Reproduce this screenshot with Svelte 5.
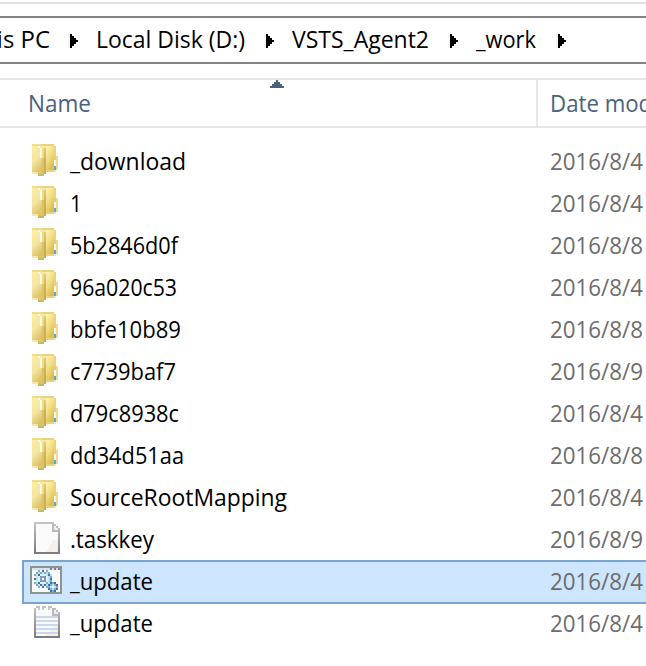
<script>
  const crumbs = [
    { text: 'This PC', width: 81, before: 18, after: 18 },
    { text: 'Local Disk (D:)', width: 149, before: 19, after: 18 },
    { text: 'VSTS_Agent2', width: 137, before: 19, after: 18 },
    { text: '_work', width: 60, before: 20, after: 0 }
  ];
  const files = [
    { kind: 'folder', name: '_download', width: 116, date: '2016/8/4' },
    { kind: 'folder', name: '1', width: 12, date: '2016/8/4' },
    { kind: 'folder', name: '5b2846d0f', width: 108, date: '2016/8/8' },
    { kind: 'folder', name: '96a020c53', width: 107, date: '2016/8/4' },
    { kind: 'folder', name: 'bbfe10b89', width: 111, date: '2016/8/8' },
    { kind: 'folder', name: 'c7739baf7', width: 106, date: '2016/8/9' },
    { kind: 'folder', name: 'd79c8938c', width: 109, date: '2016/8/4' },
    { kind: 'folder', name: 'dd34d51aa', width: 114, date: '2016/8/8' },
    { kind: 'folder', name: 'SourceRootMapping', width: 217, date: '2016/8/4' },
    { kind: 'file', name: '.taskkey', width: 84, date: '2016/8/9' },
    { kind: 'batch', name: '_update', width: 83, date: '2016/8/4', selected: true },
    { kind: 'text', name: '_update', width: 83, date: '2016/8/4' }
  ];
  const colors = { b: '#7fabcc', c: '#3b74a4', l: '#bfe0f0', d: '#8796a4', w: '#ffffff', p: '#e2f0f7' };
  const bigGear = [
    '..b.c.b..',
    '.blblblb.',
    'blcppplcl',
    '.lpdbdplb',
    'clpbwdplc',
    '.lpdbdplb',
    'blcpppblb',
    '.blclclb.',
    '..b.c.b..'
  ];
  const smallGear = ['.cbc.', 'cblbc', 'blwlb', 'cblbc', '.cbc.'];
  const pixels = (rows, left, top) =>
    rows.flatMap((row, y) =>
      [...row].map((c, x) => ({ x: x + left, y: y + top, fill: colors[c] })).filter((p) => p.fill)
    );
  const gears = [...pixels(bigGear, 2, 3), ...pixels(smallGear, 9, 9)];
</script>

{#snippet label(text, width)}
  <svg class="label" {width} height="34">
    <text x="0" y="24" textLength={width} lengthAdjust="spacingAndGlyphs">{text}</text>
  </svg>
{/snippet}

{#snippet icon(kind)}
  <svg class="icon" viewBox="0 0 16 16" shape-rendering="crispEdges">
    {#if kind === 'folder'}
      <path fill="#f3e6ae" d="M1 0h6v1h6v13H8v1H7v1H4v-1H1z" />
      <path fill="url(#flap)" d="M1 1h5v14H4v-1H1z" />
      <path fill="#f0dc8a" d="M1 0h5v1H1z" />
      <path fill="url(#panel)" d="M8 1h4v12H8z" />
      <path fill="#ecd27a" d="M6 0h6v1H6zM12 1h1v5h-1zM8 13h4v1H8z" />
      <path fill="url(#fold)" d="M7 2h1v13H7z" />
      <path fill="#dcc16b" d="M6 7h1v8H6z" />
      <path fill="#f1db86" d="M6 2h1v5H6z" />
      <path fill="#fffdf0" d="M4 1h1v1h1v5H5V2H4z" />
      <path fill="#cfb562" d="M4 15h3v1H4z" />
      <path fill="#e5cd78" d="M12 6h1v7h-1z" />
      <path fill="#fbfaf2" d="M12 8h1v3h-1z" />
      <path fill="#4eaed4" d="M12 11h1v2h-1z" />
      <path fill="#ecd995" d="M13 6h1v7h-1z" />
    {:else if kind === 'batch'}
      <path fill="#8b9493" d="M0 1h16v14H0z" />
      <path fill="#f8f9fb" d="M1 2h14v12H1z" />
      <path fill="#dcdee8" d="M1 2h14v1H1z" />
      <path fill="#7480a0" d="M10 2h1v1h-1zM12 2h1v1h-1zM14 2h1v1h-1z" />
      {#each gears as p}
        <rect x={p.x} y={p.y} width="1" height="1" fill={p.fill} />
      {/each}
    {:else}
      <path fill="url(#edge)" d="M2 0h10v1h1v1h1v1h1v13H2z" />
      <path fill="#fafafa" d="M3 1h8v4h3v10H3z" />
      <path fill="#f6efec" d="M11 9h3v6H8v-1h1v-1h1v-2h1z" />
      <path fill="#b9b9b9" d="M11 1h1v3h2v1h-3z" />
      <path fill="#eeeeee" d="M12 2h1v1h1v1h-2z" />
      {#if kind === 'text'}
        <path fill="#ffffff" d="M2 0h1v1H2zM5 0h1v1H5zM8 0h1v1H8zM11 0h1v1h-1z" />
        <path fill="#c9c9c9" d="M4 1h1v1H4zM6 1h1v1H6zM9 1h1v1H9z" />
        <path fill="#cbd7ea" d="M3 5h11v1H3zM3 7h11v1H3zM3 9h11v1H3zM3 11h11v1H3zM3 13h11v1H3z" />
      {/if}
    {/if}
  </svg>
{/snippet}

<svg class="defs" width="0" height="0">
  <defs>
    <linearGradient id="flap" x1="0" y1="0" x2=".35" y2="1">
      <stop stop-color="#fbefa0" /><stop offset=".55" stop-color="#f5e5a0" /><stop offset="1" stop-color="#ddc468" />
    </linearGradient>
    <linearGradient id="panel" x1="0" y1="0" x2=".6" y2="1">
      <stop stop-color="#fff5b4" /><stop offset=".5" stop-color="#f2de83" /><stop offset="1" stop-color="#dcbd4e" />
    </linearGradient>
    <linearGradient id="fold" x2="0" y2="1">
      <stop stop-color="#e3cb76" /><stop offset=".5" stop-color="#ceb157" /><stop offset="1" stop-color="#c8a94e" />
    </linearGradient>
    <linearGradient id="edge" x2="0" y2="1">
      <stop stop-color="#c4c4c4" /><stop offset="1" stop-color="#7b7b7b" />
    </linearGradient>
  </defs>
</svg>

<main>
  <nav>
    {#each crumbs as crumb}
      {@render label(crumb.text, crumb.width)}
      <svg class="arrow" style:margin-left="{crumb.before}px" style:margin-right="{crumb.after}px" viewBox="0 0 5 7" shape-rendering="crispEdges">
        <path fill="#f4f4f4" d="M0 0h1v7H0z" />
        <path d="M1 0h1v1h1v1h1v1h1v1H4v1H3v1H2v1H1z" />
      </svg>
    {/each}
  </nav>
  <header>
    <div class="name">
      {@render label('Name', 63)}
      <svg class="sort" viewBox="0 0 7 4" shape-rendering="crispEdges">
        <path d="M3 0h1v1h1v1h1v1h1v1H0V3h1V2h1V1h1z" />
      </svg>
    </div>
    <div class="date">{@render label('Date modified', 147)}</div>
  </header>
  <section>
    {#each files as file}
      <div class="row" class:selected={file.selected}>
        {@render icon(file.kind)}
        <div class="filename">{@render label(file.name, file.width)}</div>
        <div class="modified">{@render label(file.date, 93)}</div>
      </div>
    {/each}
  </section>
</main>

<style>
  :global(body) { background: #fff; overflow: hidden; }
  .defs { display: block; height: 0; }
  main {
    box-sizing: border-box;
    width: 646px;
    height: 666px;
    overflow: hidden;
    background: #fff;
    padding-top: 2px;
    font: 24px 'Open Sans', 'Noto Sans', sans-serif;
  }
  svg { flex: none; display: block; }
  .label { overflow: visible; fill: currentColor; }
  nav {
    display: flex;
    box-sizing: border-box;
    height: 62px;
    border-top: 2px solid #e0e0e0;
    border-bottom: 2px solid #848484;
    padding-top: 20px;
    background: linear-gradient(#848484, #848484) 0 12px / 100% 2px no-repeat;
  }
  nav > .label:first-child { margin-left: -31px; }
  .arrow { width: 10px; height: 14px; margin-top: 10px; }
  header {
    display: flex;
    box-sizing: border-box;
    height: 50px;
    margin-top: 14px;
    border-top: 2px solid #e6e6e6;
    border-bottom: 2px solid #e6e6e6;
    color: #4a627e;
  }
  .name {
    display: flex;
    box-sizing: border-box;
    width: 538px;
    flex: none;
    border-right: 2px solid #e6e6e6;
    padding-left: 28px;
  }
  header .label { margin-top: 8px; }
  .sort { width: 14px; height: 8px; margin-left: 179px; fill: #4a627e; }
  .date { padding-left: 12px; }
  section { padding-top: 12px; }
  .row {
    display: flex;
    box-sizing: border-box;
    height: 42px;
    margin-left: 22px;
    padding: 4px 0 0 8px;
  }
  .icon { width: 32px; height: 32px; }
  .filename { width: 488px; flex: none; padding: 2px 0 0 8px; box-sizing: border-box; }
  .modified { color: #6d6d6d; padding-top: 2px; }
  .selected {
    height: 44px;
    margin-bottom: -2px;
    padding: 2px 0 0 6px;
    border: 2px solid #7aa3cf;
    border-right: 0;
    background: #cee5fe;
  }
</style>
